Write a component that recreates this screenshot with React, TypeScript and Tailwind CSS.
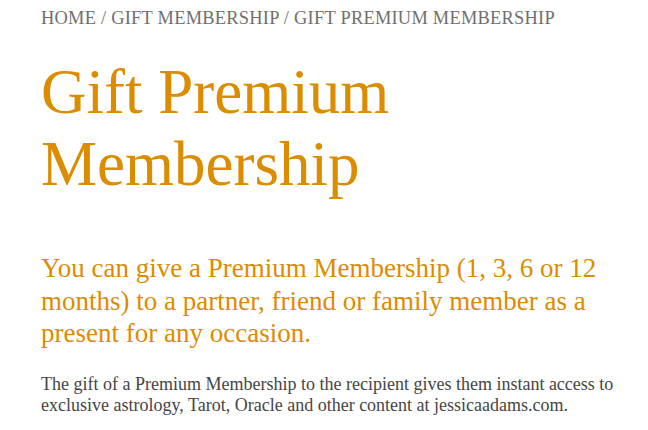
export default function App() {
  return (
    <div className="w-[648px] h-[430px] bg-white overflow-hidden pl-[41px] pr-[10px] pt-[8px]" style={{ fontFamily: '"Liberation Serif", serif' }}>
      <div className="text-[18.4px] leading-[20px] tracking-[0.25px] text-[#6f6f6f] whitespace-nowrap">HOME / GIFT MEMBERSHIP / GIFT PREMIUM MEMBERSHIP</div>
      <h1 className="mt-[28px] text-[63px] leading-[72px] text-[#db8c00]">Gift Premium Membership</h1>
      <p className="mt-[52px] text-[27px] leading-[32.5px] text-[#db8c00]">You can give a Premium Membership (1, 3, 6 or 12 months) to a partner, friend or family member as a present for any occasion.</p>
      <p className="mt-[24px] text-[18px] leading-[21px] text-[#454545]">The gift of a Premium Membership to the recipient gives them instant access to exclusive astrology, Tarot, Oracle and other content at jessicaadams.com.</p>
    </div>
  );
}
